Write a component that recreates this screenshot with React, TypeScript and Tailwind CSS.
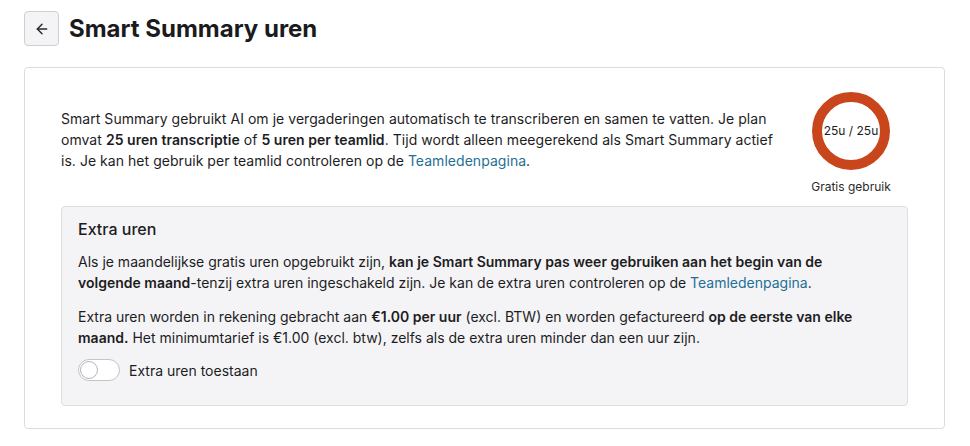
import React from "react";

export default function App() {
  return (
    <div
      className="min-h-[446px] w-[970px] bg-white text-[#1d1d1f]"
      style={{ fontFamily: "Inter, 'Liberation Sans', sans-serif" }}
    >
      <div className="px-6 pt-[11px]">
        <div className="flex items-center gap-[10px]">
          <button className="flex h-[35px] w-[35px] items-center justify-center rounded-[4px] border border-[#cfcfd3] bg-[#f4f4f6] text-[#2a2a2a]">
            <svg width="16" height="16" viewBox="0 0 24 24" fill="none" stroke="currentColor" strokeWidth="2.2" strokeLinecap="round" strokeLinejoin="round">
              <path d="M19 12H5" />
              <path d="M12 19l-7-7 7-7" />
            </svg>
          </button>
          <h1 className="text-[24px] font-bold leading-[30px] text-[#1b1b1d]">Smart Summary uren</h1>
        </div>

        <div className="mt-[21px] w-[921px] rounded-[4px] border border-[#dcdcde] px-9 pb-[22px] pt-6">
          <div className="flex items-start justify-between">
            <p className="mt-[16px] w-[718px] text-[14px] leading-[21px] tracking-[0.04px]">
              Smart Summary gebruikt AI om je vergaderingen automatisch te transcriberen en samen te vatten. Je plan omvat{" "}
              <b className="font-semibold">25 uren transcriptie</b> of <b className="font-semibold">5 uren per teamlid</b>. Tijd wordt alleen meegerekend als Smart Summary actief is. Je kan het gebruik per teamlid controleren op de{" "}
              <a className="text-[#1f6f95]">Teamledenpagina</a>.
            </p>
            <div className="flex w-[114px] flex-col items-center">
              <div className="flex h-[78px] w-[78px] items-center justify-center rounded-full border-[10px] border-[#c9461d]">
                <span className="whitespace-nowrap text-[12px] leading-none text-[#1b1b1d]">25u / 25u</span>
              </div>
              <div className="mt-[9px] text-[12px] leading-[15px] text-[#2a2a2a]">Gratis gebruik</div>
            </div>
          </div>

          <div className="mt-[12px] rounded-[4px] border border-[#dedee2] bg-[#f4f4f6] pb-6 pl-4 pr-6 pt-[11px]">
            <h2 className="text-[16px] font-medium leading-[22px]">Extra uren</h2>
            <p className="mt-[11px] text-[14px] leading-[21px]">
              Als je maandelijkse gratis uren opgebruikt zijn,{" "}
              <b className="font-semibold">kan je Smart Summary pas weer gebruiken aan het begin van de volgende maand</b>-tenzij extra uren ingeschakeld zijn. Je kan de extra uren controleren op de{" "}
              <a className="text-[#1f6f95]">Teamledenpagina</a>.
            </p>
            <p className="mt-[13px] text-[14px] leading-[21px]">
              Extra uren worden in rekening gebracht aan <b className="font-semibold">€1.00 per uur</b> (excl. BTW) en worden gefactureerd{" "}
              <b className="font-semibold">op de eerste van elke maand.</b> Het minimumtarief is €1.00 (excl. btw), zelfs als de extra uren minder dan een uur zijn.
            </p>
            <div className="mt-[11px] flex items-center gap-[9px]">
              <div className="relative h-[22px] w-[42px] rounded-full border border-[#c4c4c8] bg-white">
                <div className="absolute left-[1px] top-[1px] h-[18px] w-[18px] rounded-full border border-[#b5b5ba] bg-white" />
              </div>
              <span className="text-[14px] leading-[21px]">Extra uren toestaan</span>
            </div>
          </div>
        </div>
      </div>
    </div>
  );
}
